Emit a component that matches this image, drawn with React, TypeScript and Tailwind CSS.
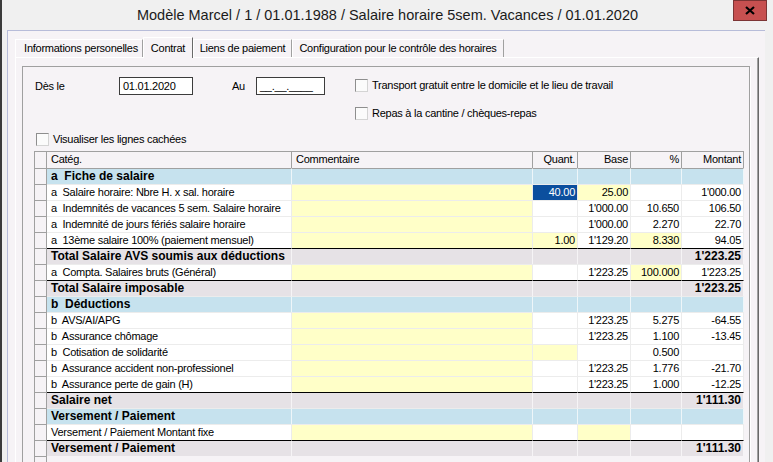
import React from 'react'

type Bg = 'w' | 'y' | 's'
type Cell = [string, Bg]

interface Row {
  kind: 'section' | 'line' | 'total'
  label: string
  cells?: Cell[]
  total?: string
}

const rows: Row[] = [
  { kind: 'section', label: 'a  Fiche de salaire' },
  { kind: 'line', label: 'a  Salaire horaire: Nbre H. x sal. horaire', cells: [['', 'y'], ['40.00', 's'], ['25.00', 'y'], ['', 'w'], ["1'000.00", 'w']] },
  { kind: 'line', label: 'a  Indemnités de vacances 5 sem. Salaire horaire', cells: [['', 'y'], ['', 'w'], ["1'000.00", 'w'], ['10.650', 'w'], ['106.50', 'w']] },
  { kind: 'line', label: 'a  Indemnité de jours fériés salaire horaire', cells: [['', 'y'], ['', 'w'], ["1'000.00", 'w'], ['2.270', 'w'], ['22.70', 'w']] },
  { kind: 'line', label: 'a  13ème salaire 100% (paiement mensuel)', cells: [['', 'y'], ['1.00', 'y'], ["1'129.20", 'w'], ['8.330', 'y'], ['94.05', 'w']] },
  { kind: 'total', label: 'Total Salaire AVS soumis aux déductions', total: "1'223.25" },
  { kind: 'line', label: 'a  Compta. Salaires bruts (Général)', cells: [['', 'y'], ['', 'w'], ["1'223.25", 'w'], ['100.000', 'y'], ["1'223.25", 'w']] },
  { kind: 'total', label: 'Total Salaire imposable', total: "1'223.25" },
  { kind: 'section', label: 'b  Déductions' },
  { kind: 'line', label: 'b  AVS/AI/APG', cells: [['', 'y'], ['', 'w'], ["1'223.25", 'w'], ['5.275', 'w'], ['-64.55', 'w']] },
  { kind: 'line', label: 'b  Assurance chômage', cells: [['', 'y'], ['', 'w'], ["1'223.25", 'w'], ['1.100', 'w'], ['-13.45', 'w']] },
  { kind: 'line', label: 'b  Cotisation de solidarité', cells: [['', 'y'], ['', 'y'], ['', 'w'], ['0.500', 'w'], ['', 'w']] },
  { kind: 'line', label: 'b  Assurance accident non-professionel', cells: [['', 'y'], ['', 'w'], ["1'223.25", 'w'], ['1.776', 'w'], ['-21.70', 'w']] },
  { kind: 'line', label: 'b  Assurance perte de gain (H)', cells: [['', 'y'], ['', 'w'], ["1'223.25", 'w'], ['1.000', 'w'], ['-12.25', 'w']] },
  { kind: 'total', label: 'Salaire net', total: "1'111.30" },
  { kind: 'section', label: 'Versement / Paiement' },
  { kind: 'line', label: 'Versement / Paiement Montant fixe', cells: [['', 'y'], ['', 'w'], ['', 'y'], ['', 'w'], ['', 'w']] },
  { kind: 'total', label: 'Versement / Paiement', total: "1'111.30" },
]

const cols = 'grid grid-cols-[12px_245px_241px_45px_53px_51px_62px]'
const txt = 'text-[11px] tracking-[-0.25px] leading-[15px]'

const bgClass: Record<Bg, string> = {
  w: 'bg-white',
  y: 'bg-[#ffffc8]',
  s: 'bg-[#0b4f9e] text-white',
}

function Checkbox({ label }: { label: string }) {
  return (
    <div className="flex h-[13px] items-center gap-[4px]">
      <span className="h-[13px] w-[13px] shrink-0 border border-b-[#d4d4d4] border-l-[#8e8e8e] border-r-[#d4d4d4] border-t-[#8e8e8e] bg-[#fbfbfb]" />
      <span className={`${txt} whitespace-nowrap`}>{label}</span>
    </div>
  )
}

function DateInput({ value, width }: { value: string; width: string }) {
  return (
    <div className={`${width} h-[18px] border border-[#3c3c3c] bg-white pl-[3px] ${txt} leading-[16px]`}>
      {value}
    </div>
  )
}

function TableRow({ row, topBorder }: { row: Row; topBorder: string }) {
  const lead = 'border-t border-r border-[#a0a0a0] bg-[#f6f3f6]'

  if (row.kind === 'section') {
    return (
      <div className={`${cols} h-[16px]`}>
        <div className={lead} />
        <div className={`border-t border-r ${topBorder} border-r-[#eef6f9] bg-[#c6e2ee] pl-[4px] text-[12px] font-bold leading-[15px] whitespace-pre`}>
          {row.label}
        </div>
        {[0, 1, 2, 3, 4].map((i) => (
          <div key={i} className={`border-t border-r ${topBorder} border-r-[#eef6f9] bg-[#c6e2ee]`} />
        ))}
      </div>
    )
  }

  if (row.kind === 'total') {
    return (
      <div className={`${cols} h-[16px]`}>
        <div className={lead} />
        <div className="border-t border-r border-t-black border-r-[#f6f4f6] bg-[#e6e2e6] pl-[4px] text-[12px] font-bold leading-[15px] whitespace-pre">
          {row.label}
        </div>
        {[0, 1, 2, 3].map((i) => (
          <div key={i} className="border-t border-r border-t-black border-r-[#f6f4f6] bg-[#e6e2e6]" />
        ))}
        <div className="border-t border-r border-t-black border-r-[#f6f4f6] bg-[#e6e2e6] pr-[2px] text-right text-[12px] font-bold leading-[15px]">
          {row.total}
        </div>
      </div>
    )
  }

  return (
    <div className={`${cols} h-[16px]`}>
      <div className={lead} />
      <div className={`border-t border-r ${topBorder} border-r-[#ececec] bg-white pl-[4px] ${txt} whitespace-pre overflow-hidden`}>
        {row.label}
      </div>
      {row.cells!.map(([value, bg], i) => (
        <div
          key={i}
          className={`border-t border-r ${topBorder} border-r-[#ececec] ${bgClass[bg]} pr-[2px] text-right ${txt}`}
        >
          {value}
        </div>
      ))}
    </div>
  )
}

function SalaryTable() {
  return (
    <div className="ml-[11px] mt-[5px] w-[710px] border-l border-t border-[#a0a0a0]">
      {/* En-tête */}
      <div className={`${cols} h-[16px] bg-[#f6f3f6] ${txt}`}>
        <div className="border-r border-[#a0a0a0]" />
        <div className="border-r border-[#a0a0a0] pl-[4px]">Catég.</div>
        <div className="border-r border-[#a0a0a0] pl-[4px]">Commentaire</div>
        <div className="border-r border-[#a0a0a0] pr-[2px] text-right">Quant.</div>
        <div className="border-r border-[#a0a0a0] pr-[2px] text-right">Base</div>
        <div className="border-r border-[#a0a0a0] pr-[2px] text-right">%</div>
        <div className="border-r border-[#a0a0a0] pr-[2px] text-right">Montant</div>
      </div>

      {rows.map((row, i) => (
        <TableRow key={i} row={row} topBorder={i === 0 ? 'border-t-[#a0a0a0]' : 'border-t-[#ececec]'} />
      ))}

      <div className={`${cols} h-[12px]`}>
        <div className="border-t border-r border-[#a0a0a0]" />
      </div>
    </div>
  )
}

const tabs = [
  { label: 'Informations personelles', width: 'w-[128px] pl-[4px]' },
  { label: 'Contrat', width: 'w-[50px]' },
  { label: 'Liens de paiement', width: 'w-[99px]' },
  { label: 'Configuration pour le contrôle des horaires', width: 'w-[212px]' },
]

export default function App() {
  return (
    <div className="flex h-[462px] w-[773px] overflow-hidden bg-[#f0f0f0] font-['Liberation_Sans',Arial,sans-serif] text-black">
      <div className="w-[2px] shrink-0 bg-[#3b3b3b]" />

      <div className="flex min-w-0 flex-1 flex-col">
        {/* Barre de titre */}
        <div className="grid h-[30px] shrink-0 grid-cols-[1fr_auto_1fr]">
          <div />
          <div className="self-center pt-[1px] text-[14.5px] text-[#1b1b1b] whitespace-nowrap">
            Modèle Marcel / 1 / 01.01.1988 / Salaire horaire 5sem. Vacances / 01.01.2020
          </div>
          <div className="flex justify-end pr-[6px]">
            <div className="flex h-[21px] w-[34px] items-center justify-center border border-[#7c3434] bg-[#c75050]">
              <svg width="10" height="9" viewBox="0 0 10 9">
                <path d="M1 1 L9 8 M9 1 L1 8" stroke="#000" strokeWidth="2.2" />
              </svg>
            </div>
          </div>
        </div>

        <div className="ml-[5px] flex w-[758px] flex-1 flex-col border-l border-t border-[#b7bcd9] bg-[#f6f3f6] pl-[7px] pt-[6px]">
          {/* Onglets */}
          <div className={`flex items-end ${txt}`}>
            {tabs.map((tab) =>
              tab.label === 'Contrat' ? (
                <div
                  key={tab.label}
                  className={`${tab.width} relative z-10 -mb-[1px] flex h-[21px] items-center justify-center border-l border-t border-r border-l-white border-t-white border-r-[#696969] bg-[#f6f3f6]`}
                >
                  {tab.label}
                </div>
              ) : (
                <div
                  key={tab.label}
                  className={`${tab.width} flex h-[18px] items-center justify-center border-l border-t border-r border-l-white border-t-white border-r-[#a0a0a0] whitespace-nowrap`}
                >
                  {tab.label}
                </div>
              )
            )}
          </div>

          {/* Panneau Contrat */}
          <div className="w-[744px] flex-1 border-l border-t border-r border-l-white border-t-white border-r-[#696969] shadow-[inset_-1px_0_0_#a0a0a0]">
            <div className="ml-[6px] mt-[8px] h-[420px] w-[728px] border border-[#a0a0a0] shadow-[1px_1px_0_#ffffff]">
              <div className="flex pl-[12px] pt-[10px]">
                <div className={`flex h-[18px] items-center ${txt}`}>
                  <span className="w-[84px]">Dès le</span>
                  <DateInput value="01.01.2020" width="w-[74px]" />
                  <span className="ml-[39px] w-[24px]">Au</span>
                  <DateInput value="__.__.____" width="w-[69px]" />
                </div>
                <div className="ml-[30px] flex flex-col gap-[15px] pt-[2px]">
                  <Checkbox label="Transport gratuit entre le domicile et le lieu de travail" />
                  <Checkbox label="Repas à la cantine / chèques-repas" />
                </div>
              </div>

              <div className="mt-[13px] pl-[13px]">
                <Checkbox label="Visualiser les lignes cachées" />
              </div>

              <SalaryTable />
            </div>
          </div>
        </div>
      </div>
    </div>
  )
}
